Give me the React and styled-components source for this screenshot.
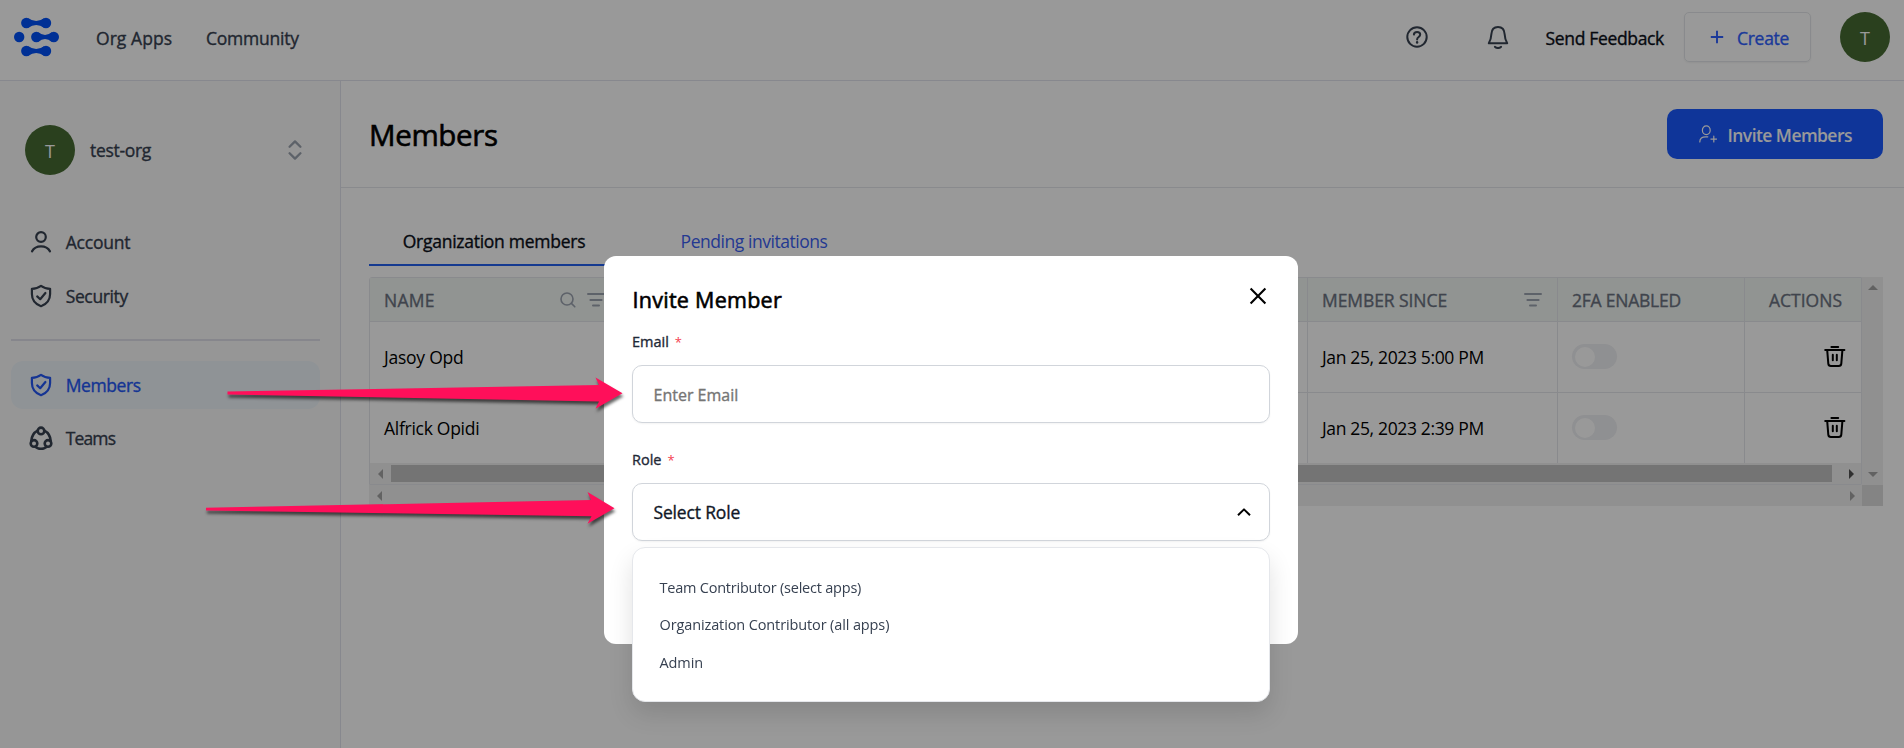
import React from "react";
import styled, { createGlobalStyle, css } from "styled-components";

const GlobalStyle = createGlobalStyle`
  *, *::before, *::after { box-sizing: border-box; }
  body {
    margin: 0;
    overflow: hidden;
    background: #fff;
    color: #000;
    font-family: "Open Sans", "Noto Sans", sans-serif;
    font-size: 17.5px;
    line-height: 24px;
  }
  svg { display: block; flex: none; }
`;

/* ---------- primitives ---------- */

/* Regular text; $medium thickens the strokes to a medium weight. */
const Label = styled.span`
  white-space: nowrap;
  font-size: ${(p) => p.$size || 17.5}px;
  font-weight: ${(p) => p.$weight || 400};
  letter-spacing: ${(p) => p.$spacing || 0}px;
  ${(p) => p.$medium && css`-webkit-text-stroke: ${p.$size > 20 ? 0.6 : 0.35}px currentColor;`}
`;

const Avatar = styled.div`
  display: flex;
  align-items: center;
  justify-content: center;
  width: 50px;
  height: 50px;
  border-radius: 50%;
  background: #466b32;
  color: #fff;
  font-size: 18px;
  padding-top: 1px;
`;

const Glyph = styled.svg.attrs((p) => ({
  width: p.$w || 24,
  height: p.$h || p.$w || 24,
  viewBox: `0 0 ${p.$w || 24} ${p.$h || p.$w || 24}`,
  fill: "none",
  stroke: "currentColor",
  strokeLinecap: p.$cap || "round",
  strokeLinejoin: "round",
}))`
  stroke-width: ${(p) => p.$stroke || 2};
`;

/* ---------- icons ---------- */

const Logo = () => (
  <svg width="45" height="40" viewBox="0 0 45 40" fill="#0050f8">
    {[6, 34].map((y) => (
      <g key={y} transform={`translate(0 ${y})`}>
        <circle cx="12.3" cy="0" r="5.2" />
        <circle cx="32" cy="0" r="5.2" />
        <path d="M14.2 -4.7Q22.2 .7 30.2 -4.7V4.7Q22.2 -.7 14.2 4.7Z" />
      </g>
    ))}
    <circle cx="5.2" cy="20" r="5.2" />
    <circle cx="22.3" cy="20" r="5.2" />
    <circle cx="39.8" cy="20" r="5.2" />
    <path d="M24.2 15.3Q31 20.7 37.9 15.3V24.7Q31 19.3 24.2 24.7Z" />
  </svg>
);

const HelpIcon = () => (
  <Glyph $stroke={2}>
    <circle cx="12" cy="12" r="9.7" />
    <path d="M8.9 9.6C9 6 15.2 6 15.2 9.6C15.2 12 12.1 11.9 12.1 14.4" />
    <path d="M12.1 17.3v.3" strokeWidth="2.4" />
  </Glyph>
);

const BellIcon = () => (
  <Glyph $stroke={2}>
    <path d="M12 2C7.9 2 5.6 5 5.4 9C5.2 13 4.4 15.4 2.8 18.3H21.2C19.6 15.4 18.8 13 18.6 9C18.4 5 16.1 2 12 2Z" />
    <path d="M9 21.8C10.3 23.4 13.7 23.4 15 21.8" strokeWidth="2.1" />
  </Glyph>
);

const PlusIcon = () => (
  <Glyph $w={14} $stroke={1.9} $cap="butt">
    <path d="M7 .8V13.2M.8 7H13.2" />
  </Glyph>
);

const InviteIcon = () => (
  <Glyph $w={20} $stroke={1.2}>
    <ellipse cx="9.3" cy="6.3" rx="3.9" ry="4.4" />
    <path d="M2.8 18C2.8 14.2 5.2 12.8 8.6 12.8H10.8M16.8 12.2V18M13.9 15.1H19.6" />
  </Glyph>
);

const UserIcon = () => (
  <Glyph $stroke={2.2}>
    <circle cx="12" cy="7" r="4.8" />
    <path d="M3 21.4C6.6 14.8 17.4 14.8 21 21.4" />
  </Glyph>
);

const ShieldIcon = () => (
  <Glyph $stroke={2.2}>
    <path d="M12 1.9C9.4 3.9 6.4 4.8 2.9 4.8V10C2.9 15.6 6 20 12 22.2C18 20 21.1 15.6 21.1 10V4.8C17.6 4.8 14.6 3.9 12 1.9Z" />
    <path d="M8.2 12.4L11.2 15.2L16.4 9" />
  </Glyph>
);

const TeamsIcon = () => (
  <Glyph $stroke={2.6}>
    <circle cx="12" cy="4.9" r="3.3" />
    <circle cx="5" cy="17.4" r="3.3" />
    <circle cx="19" cy="17.4" r="3.3" />
    <path d="M8.6 4.6C4.8 6.6 2.6 10 2.3 15M15.4 4.6C19.2 6.6 21.4 10 21.7 15M6.6 21C10 23.4 14 23.4 17.4 21" />
  </Glyph>
);

const SwitcherIcon = () => (
  <Glyph $w={14} $h={20} $stroke={2.3}>
    <path d="M1.6 6.8L7 1.4L12.4 6.8M1.6 13.2L7 18.6L12.4 13.2" />
  </Glyph>
);

const SearchIcon = () => (
  <Glyph $w={16} $stroke={1.6}>
    <circle cx="7" cy="7" r="6" />
    <path d="M11.4 11.4L14.8 14.8" />
  </Glyph>
);

const FilterIcon = () => (
  <Glyph $w={18} $h={14} $stroke={2}>
    <path d="M1 1H17M3.4 7H14.6M6 12.6H12" />
  </Glyph>
);

const TrashIcon = () => (
  <Glyph $stroke={2}>
    <path d="M8.4 1.9H15.2M2.2 5.1H21.4M4.2 5.1L5.3 18.6Q5.5 21 7.9 21H15.7Q18.1 21 18.3 18.6L19.4 5.1M9.8 9.8V15.3M13.8 9.8V15.3" />
  </Glyph>
);

const CloseIcon = () => (
  <Glyph $w={18} $stroke={2.1} $cap="butt">
    <path d="M1.6 1.6L16.4 16.4M16.4 1.6L1.6 16.4" />
  </Glyph>
);

const CaretIcon = () => (
  <Glyph $w={14} $h={8} $stroke={2} $cap="butt">
    <path d="M1 7.2L7 1.4L13 7.2" />
  </Glyph>
);

/* ---------- shell ---------- */

const Page = styled.div`
  display: grid;
  grid-template-rows: 81px 1fr;
  height: 748px;
`;

const TopBar = styled.header`
  display: flex;
  align-items: center;
  padding: 0 14px 6px;
  border-bottom: 1px solid #e2e3ed;
  color: #374151;
`;

const TopLinks = styled.nav`
  display: flex;
  gap: 34px;
  margin-left: 37px;
  padding-top: 2px;
`;

const TopActions = styled.div`
  display: flex;
  align-items: center;
  margin-left: auto;
`;

const BellSlot = styled.div`
  margin: 0 35px 0 57.5px;
`;

const FeedbackLink = styled.a`
  display: flex;
  color: #0b0f19;
  padding-top: 2px;
`;

const CreateButton = styled.button`
  display: flex;
  align-items: center;
  gap: 13px;
  width: 126.5px;
  height: 50px;
  margin: 0 29.5px 0 20px;
  padding: 0 0 0 25px;
  border: 1px solid #e5e7eb;
  border-radius: 5px;
  background: transparent;
  box-shadow: 0 1px 2px rgba(0, 0, 0, 0.05);
  color: #2d5fff;
  font: inherit;
  span { padding-top: 2px; }
`;

const Body = styled.div`
  display: grid;
  grid-template-columns: 341px 1fr;
`;

/* ---------- sidebar ---------- */

const Sidebar = styled.aside`
  padding: 44px 20px 0 11px;
  background: #fbfbfb;
  border-right: 1px solid #e2e3ed;
  color: #374151;
`;

const OrgSwitcher = styled.div`
  display: flex;
  align-items: center;
  gap: 15px;
  height: 50px;
  margin-bottom: 43.4px;
  padding: 0 18.5px 0 14px;
  > svg { margin-left: auto; color: #9ca3af; }
`;

const NavItem = styled.a`
  display: flex;
  align-items: center;
  gap: 13px;
  height: 48px;
  margin-bottom: 5.3px;
  padding-left: 17.7px;
  border-radius: 12px;
  ${(p) => p.$active && css`
    background: #eff5fb;
    color: #2458f5;
  `}
`;

const Divider = styled.hr`
  height: 2px;
  margin: 19px 0 20px;
  border: 0;
  background: #dfdfea;
`;

/* ---------- main ---------- */

const PageHeader = styled.div`
  display: flex;
  align-items: center;
  justify-content: space-between;
  height: 107px;
  padding: 0 21px 0 28px;
  border-bottom: 1px solid #e5e7eb;
`;

const PageTitle = styled.h1`
  display: flex;
  margin: 2px 0 0;
  font: inherit;
`;

const InviteButton = styled.button`
  display: flex;
  align-items: center;
  gap: 10.5px;
  width: 216px;
  height: 50px;
  padding: 0 0 0 30px;
  border: 0;
  border-radius: 10px;
  background: #1959ff;
  color: #fff;
  font: inherit;
  span { padding-top: 2px; }
`;

const Content = styled.div`
  padding: 28px 21px 0 28px;
`;

const TabList = styled.div`
  display: flex;
  height: 50px;
  margin-bottom: 11px;
`;

const Tab = styled.div`
  display: flex;
  align-items: center;
  justify-content: center;
  width: ${(p) => p.$width}px;
  padding-top: 1px;
  border-bottom: 2px solid ${(p) => (p.$active ? "#2461f0" : "transparent")};
  color: ${(p) => (p.$active ? "#0b0f19" : "#3b60f2")};
`;

/* ---------- table ---------- */

const TableShell = styled.div`
  display: grid;
  grid-template-columns: 1493px 21px;
  grid-template-rows: 208px 21px;
`;

const Table = styled.div`
  border: 1px solid #e5e7eb;
  border-top-left-radius: 3px;
`;

const Row = styled.div`
  display: grid;
  grid-template-columns: 250px 1fr 250px 187px 117px;
  height: ${(p) => p.$height}px;
  border-bottom: ${(p) => (p.$last ? 0 : 1)}px solid #e5e7eb;
  ${(p) => p.$head && css`
    background: #f2f7f4;
    color: #6b7280;
  `}
`;

const Cell = styled.div`
  display: flex;
  align-items: center;
  justify-content: ${(p) => (p.$end ? "flex-end" : "space-between")};
  padding: 0 ${(p) => p.$right || 15}px ${(p) => p.$lift || 0}px 14px;
  border-left: ${(p) => (p.$first ? 0 : 1)}px solid #e5e7eb;
`;

const HeadTools = styled.div`
  display: flex;
  align-items: center;
  gap: 11px;
  color: #9ca3b0;
`;

const Toggle = styled.div`
  width: 45px;
  height: 25px;
  padding: 2.5px;
  border-radius: 13px;
  background: #eff0f3;
  &::before {
    content: "";
    display: block;
    width: 20px;
    height: 20px;
    border-radius: 50%;
    background: #fff;
  }
`;

const ScrollTrack = styled.div`
  display: flex;
  flex-direction: ${(p) => (p.$vertical ? "column" : "row")};
  align-items: center;
  justify-content: space-between;
  background: #f1f1f1;
  padding: ${(p) => (p.$vertical ? "8px 0" : "0 7px 0 8px")};
  ${(p) => p.$framed && css`
    height: 21px;
  `}
`;

const ScrollThumb = styled.div`
  flex: 1;
  height: 17px;
  margin: 0 17px 0 8px;
  background: #c1c1c1;
`;

const ScrollCorner = styled.div`
  background: #dcdcdc;
`;

const Triangle = styled.i`
  width: 0;
  height: 0;
  border: 5px solid transparent;
  ${(p) => (p.$dir === "left" || p.$dir === "right")
    ? css`border-${p.$dir === "left" ? "right" : "left"}-color: ${p.$dark ? "#505050" : "#a3a3a3"};
          border-${p.$dir}-width: 0;`
    : css`border-${p.$dir === "up" ? "bottom" : "top"}-color: #a3a3a3;
          border-${p.$dir === "up" ? "top" : "bottom"}-width: 0;`}
`;

/* ---------- modal ---------- */

const Backdrop = styled.div`
  position: fixed;
  inset: 0;
  display: flex;
  justify-content: center;
  align-items: flex-start;
  padding: 256px 2px 0 0;
  background: rgba(0, 0, 0, 0.4);
`;

const Dialog = styled.div`
  width: 694px;
  height: 388px;
  padding: 28px 28px 0;
  border-radius: 12px;
  background: #fff;
`;

const DialogHead = styled.div`
  display: flex;
  justify-content: space-between;
  height: 46px;
  padding: 0 3.5px 0 0.5px;
  line-height: 32px;
  svg { margin-top: 3px; }
`;

const FieldLabel = styled.label`
  display: flex;
  align-items: center;
  gap: 6px;
  height: 24px;
  margin-bottom: 11px;
  color: #1f2937;
`;

const Required = styled.span`
  color: #f5414f;
  font-size: 13px;
`;

const fieldBox = css`
  width: 100%;
  height: 58px;
  border: 1px solid #d1d5db;
  border-radius: 10px;
  background: #fff;
  box-shadow: 0 1px 2px rgba(0, 0, 0, 0.05);
`;

const EmailInput = styled.input`
  ${fieldBox}
  display: block;
  margin-bottom: 25px;
  padding: 2px 20px 0 20.5px;
  font: 400 16px "Open Sans", "Noto Sans", sans-serif;
  -webkit-text-stroke: 0.35px currentColor;
  &::placeholder { color: #757575; opacity: 1; }
`;

const Select = styled.div`
  ${fieldBox}
  position: relative;
  display: flex;
  align-items: center;
  justify-content: space-between;
  padding: 0 18px 0 20.5px;
  color: #111827;
  > svg { color: #000; }
`;

const Options = styled.ul`
  position: absolute;
  top: 63px;
  left: -1px;
  right: -1px;
  height: 155px;
  margin: 0;
  padding: 20.9px 26.5px;
  list-style: none;
  border: 1px solid #e5e7eb;
  border-radius: 13px;
  background: #fff;
  box-shadow: 0 12px 24px rgba(0, 0, 0, 0.12);
`;

const Option = styled.li`
  display: flex;
  align-items: center;
  height: 37.5px;
  color: #374151;
`;

/* ---------- annotation arrows ---------- */

const Annotations = styled.svg`
  position: fixed;
  inset: 0;
  pointer-events: none;
  filter: drop-shadow(1px 3px 1.5px rgba(0, 0, 0, 0.6));
`;

const navTop = [
  { icon: UserIcon, text: "Account", spacing: -0.2 },
  { icon: ShieldIcon, text: "Security", spacing: -0.37 },
];
const navOrg = [
  { icon: ShieldIcon, text: "Members", spacing: -0.41, active: true },
  { icon: TeamsIcon, text: "Teams", spacing: -0.85 },
];
const members = [
  { name: "Jasoy Opd", spacing: -0.24, since: "Jan 25, 2023 5:00 PM" },
  { name: "Alfrick Opidi", spacing: -0.28, since: "Jan 25, 2023 2:39 PM" },
];
const roles = [
  { text: "Team Contributor (select apps)", spacing: -0.22 },
  { text: "Organization Contributor (all apps)", spacing: -0.12 },
  { text: "Admin", spacing: -0.1 },
];

const NavLink = ({ icon: Icon, text, spacing, active }) => (
  <NavItem $active={active}>
    <Icon />
    <Label $medium $spacing={spacing}>{text}</Label>
  </NavItem>
);

export default function App() {
  return (
    <>
      <GlobalStyle />
      <Page>
        <TopBar>
          <Logo />
          <TopLinks>
            <Label $medium $spacing={0.05}>Org Apps</Label>
            <Label $medium $spacing={-0.24}>Community</Label>
          </TopLinks>
          <TopActions>
            <HelpIcon />
            <BellSlot><BellIcon /></BellSlot>
            <FeedbackLink><Label $medium $spacing={-0.33}>Send Feedback</Label></FeedbackLink>
            <CreateButton>
              <PlusIcon />
              <Label $medium $spacing={-0.29}>Create</Label>
            </CreateButton>
            <Avatar>T</Avatar>
          </TopActions>
        </TopBar>
        <Body>
          <Sidebar>
            <OrgSwitcher>
              <Avatar>T</Avatar>
              <Label $medium $spacing={-0.3}>test-org</Label>
              <SwitcherIcon />
            </OrgSwitcher>
            {navTop.map((n) => <NavLink key={n.text} {...n} />)}
            <Divider />
            {navOrg.map((n) => <NavLink key={n.text} {...n} />)}
          </Sidebar>
          <main>
            <PageHeader>
              <PageTitle><Label $medium $size={29.5} $spacing={-0.35}>Members</Label></PageTitle>
              <InviteButton>
                <InviteIcon />
                <Label $weight={600} $spacing={-0.56}>Invite Members</Label>
              </InviteButton>
            </PageHeader>
            <Content>
              <TabList>
                <Tab $active $width={250}><Label $medium $spacing={-0.26}>Organization members</Label></Tab>
                <Tab $width={270}><Label $spacing={-0.46}>Pending invitations</Label></Tab>
              </TabList>
              <TableShell>
                <Table>
                  <Row $head $height={44}>
                    <Cell $first>
                      <Label $medium $spacing={0.25}>NAME</Label>
                      <HeadTools><SearchIcon /><FilterIcon /></HeadTools>
                    </Cell>
                    <Cell />
                    <Cell>
                      <Label $medium $spacing={-0.08}>MEMBER SINCE</Label>
                      <HeadTools><FilterIcon /></HeadTools>
                    </Cell>
                    <Cell><Label $medium $spacing={-0.23}>2FA ENABLED</Label></Cell>
                    <Cell $end $right={19}><Label $medium>ACTIONS</Label></Cell>
                  </Row>
                  {members.map((m, i) => (
                    <Row key={m.name} $height={71 - i} $last={i === 1}>
                      <Cell $first><Label $spacing={m.spacing}>{m.name}</Label></Cell>
                      <Cell />
                      <Cell><Label $spacing={-0.35}>{m.since}</Label></Cell>
                      <Cell $lift={1}><Toggle /></Cell>
                      <Cell $lift={1} $end $right={14}><TrashIcon /></Cell>
                    </Row>
                  ))}
                  <ScrollTrack $framed>
                    <Triangle $dir="left" />
                    <ScrollThumb />
                    <Triangle $dir="right" $dark />
                  </ScrollTrack>
                </Table>
                <ScrollTrack $vertical>
                  <Triangle $dir="up" />
                  <Triangle $dir="down" />
                </ScrollTrack>
                <ScrollTrack>
                  <Triangle $dir="left" />
                  <Triangle $dir="right" />
                </ScrollTrack>
                <ScrollCorner />
              </TableShell>
            </Content>
          </main>
        </Body>
      </Page>
      <Backdrop>
        <Dialog>
          <DialogHead>
            <Label $medium $size={21.5} $spacing={0.27}>Invite Member</Label>
            <CloseIcon />
          </DialogHead>
          <FieldLabel><Label $medium $size={14.5}>Email</Label><Required>*</Required></FieldLabel>
          <EmailInput placeholder="Enter Email" />
          <FieldLabel><Label $medium $size={14.5}>Role</Label><Required>*</Required></FieldLabel>
          <Select>
            <Label $medium $spacing={-0.16}>Select Role</Label>
            <CaretIcon />
            <Options>
              {roles.map((r) => (
                <Option key={r.text}><Label $size={14.5} $spacing={r.spacing}>{r.text}</Label></Option>
              ))}
            </Options>
          </Select>
        </Dialog>
      </Backdrop>
      <Annotations width="1904" height="748" viewBox="0 0 1904 748" fill="#ff0f5a">
        <path d="M227.5 391.5L599 385L595.5 377.5L622.5 393.3L595.5 408.8L599 401.5L227.5 394.5Z" />
        <path d="M206 507.8L591 500L587.5 492L614.5 508.2L587.5 523.8L591.5 516.3L206 510.6Z" />
      </Annotations>
    </>
  );
}
